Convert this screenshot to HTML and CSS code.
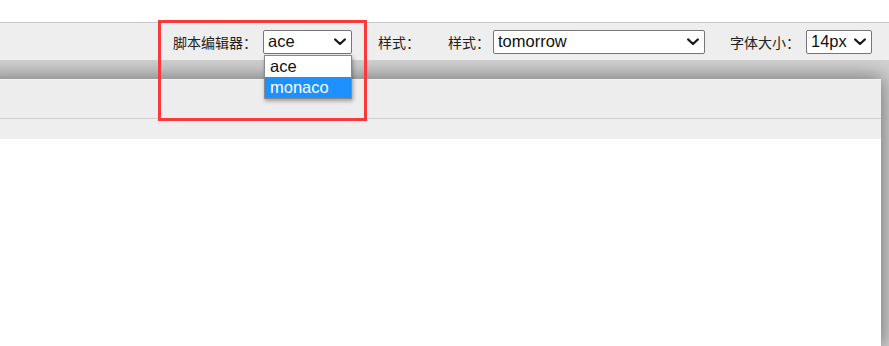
FILE: index.html
```html
<!DOCTYPE html>
<html lang="zh-CN">
<head>
  <meta charset="UTF-8" />
  <meta name="viewport" content="width=device-width, initial-scale=1.0" />
  <title>脚本编辑器设置</title>
  <link rel="stylesheet" href="styles.css">
</head>
<body>

  <div class="top-strip"></div>

  <div class="toolbar">
    <div class="field field-editor">
      <span class="label">脚本编辑器：</span>
      <div class="select select-editor">
        <span class="value">ace</span>
        <svg class="chevron" width="12" height="8" viewBox="0 0 12 8"><path d="M1.2 1.5 L6 6 L10.8 1.5" /></svg>
        <div class="options">
          <div class="option">ace</div>
          <div class="option selected">monaco</div>
        </div>
      </div>
      <div class="highlight-box"></div>
    </div>

    <div class="field field-style-a">
      <span class="label">样式：</span>
    </div>

    <div class="field field-style-b">
      <span class="label">样式：</span>
      <div class="select select-theme">
        <span class="value">tomorrow</span>
        <svg class="chevron" width="12" height="8" viewBox="0 0 12 8"><path d="M1.2 1.5 L6 6 L10.8 1.5" /></svg>
      </div>
    </div>

    <div class="field field-size">
      <span class="label">字体大小：</span>
      <div class="select select-size">
        <span class="value">14px</span>
        <svg class="chevron" width="12" height="8" viewBox="0 0 12 8"><path d="M1.2 1.5 L6 6 L10.8 1.5" /></svg>
      </div>
    </div>
  </div>

  <div class="stage">
    <div class="panel">
      <div class="panel-head"></div>
      <div class="panel-tabs"></div>
      <div class="panel-body"></div>
    </div>
  </div>

</body>
</html>
```

FILE: styles.css
```css
* {
  box-sizing: border-box;
}

html, body {
  height: 100%;
}

body {
  margin: 0;
  padding: 0;
  background: #ffffff;
  font-family: "Liberation Sans", Arial, "Noto Sans CJK SC", sans-serif;
  color: #222;
  overflow: hidden;
}

.top-strip {
  height: 22px;
  background: #ffffff;
}

.toolbar {
  height: 38px;
  background: #eeeeee;
  border-top: 1px solid #c9c9c9;
  display: flex;
  justify-content: flex-end;
  align-items: center;
  padding-right: 17px;
  position: relative;
  z-index: 2;
}

.field {
  display: flex;
  align-items: center;
  position: relative;
}

.label {
  font-family: "Noto Sans CJK SC", sans-serif;
  font-size: 14px;
  color: #222;
  line-height: 24px;
}

.field-editor .label {
  margin-right: 6px;
}

.field-style-a {
  margin-left: 26px;
}

.field-style-b {
  margin-left: 28px;
}

.field-style-b .label {
  margin-right: 3px;
}

.field-size {
  margin-left: 25px;
}

.field-size .label {
  margin-right: 6px;
}

.select {
  height: 24px;
  border: 1px solid #767676;
  border-radius: 2px;
  background: #ffffff;
  display: flex;
  align-items: center;
  justify-content: space-between;
  padding: 0 5px 0 4px;
  font-size: 16.5px;
  color: #111;
  position: relative;
}

.select-editor {
  width: 89px;
}

.select-theme {
  width: 212px;
}

.select-size {
  width: 66px;
}

.chevron path {
  fill: none;
  stroke: #1a1a1a;
  stroke-width: 2.3;
  stroke-linecap: round;
  stroke-linejoin: round;
}

.options {
  position: absolute;
  top: 24px;
  left: 0;
  width: 88px;
  background: #ffffff;
  border: 1px solid #8a8a8a;
  box-shadow: 1px 2px 4px rgba(0, 0, 0, 0.35);
  z-index: 3;
}

.option {
  height: 21px;
  line-height: 21px;
  padding-left: 5px;
  font-size: 16.5px;
  color: #111;
}

.option.selected {
  background: #1e90ff;
  color: #ffffff;
}

.highlight-box {
  position: absolute;
  left: -15px;
  top: -10px;
  width: 209px;
  height: 101px;
  border: 3px solid #f83a3a;
  z-index: 4;
}

.stage {
  height: calc(100% - 60px);
  background: #d2d2d2;
  padding: 19px 8px 0 0;
  overflow: hidden;
}

.panel {
  height: 100%;
  margin-left: -20px;
  background: #ffffff;
  box-shadow: 0 0 20px 2px rgba(0, 0, 0, 0.45);
  display: flex;
  flex-direction: column;
}

.panel-head {
  height: 40px;
  background: #ededed;
  border-top: 1px solid #f4f4f4;
  border-bottom: 1px solid #cfcfcf;
}

.panel-tabs {
  height: 20px;
  background: #eeeeee;
}

.panel-body {
  flex: 1;
  background: #ffffff;
}
```
